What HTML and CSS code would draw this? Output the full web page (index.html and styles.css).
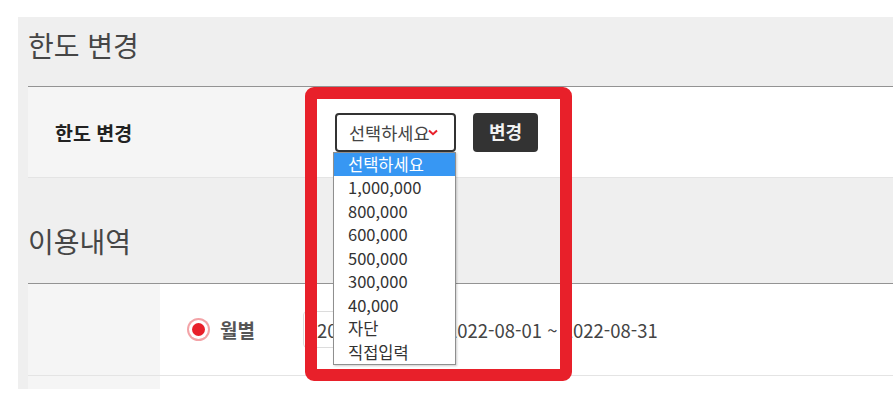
FILE: index.html
```html
<!DOCTYPE html>
<html lang="ko">
<head>
    <meta charset="UTF-8">
    <meta name="viewport" content="width=device-width, initial-scale=1.0">
    <title>한도 변경</title>
    <link rel="stylesheet" href="styles.css">
</head>
<body>
    <div class="panel">
        <h2 class="section-title">한도 변경</h2>
        <div class="form-table">
            <div class="form-row limit-row">
                <div class="form-label wide">한도 변경</div>
                <div class="form-field">
                    <div class="select-wrap">
                        <div class="fake-select">
                            선택하세요
                            <svg class="chevron" width="10" height="7" viewBox="0 0 10 7"><path d="M1 1.5 L5 5.2 L9 1.5" fill="none" stroke="#e8202a" stroke-width="2"/></svg>
                        </div>
                        <ul class="select-list">
                            <li class="active">선택하세요</li>
                            <li>1,000,000</li>
                            <li>800,000</li>
                            <li>600,000</li>
                            <li>500,000</li>
                            <li>300,000</li>
                            <li>40,000</li>
                            <li>자단</li>
                            <li>직접입력</li>
                        </ul>
                    </div>
                    <button class="btn-dark">변경</button>
                </div>
            </div>
        </div>

        <h2 class="section-title usage-title">이용내역</h2>
        <div class="form-table">
            <div class="form-row usage-row">
                <div class="form-label narrow"></div>
                <div class="form-field">
                    <label class="radio"><span class="radio-dot"></span>월별</label>
                    <div class="month-input">2022-08</div>
                    <span class="period">2022-08-01 ~ 2022-08-31</span>
                </div>
            </div>
            <div class="form-row tail-row">
                <div class="form-label narrow"></div>
                <div class="form-field"></div>
            </div>
        </div>
    </div>

    <!-- annotation box drawn over the limit selector -->
    <div class="highlight-box"></div>
</body>
</html>
```

FILE: styles.css
```css
body {
    margin: 0;
    background-color: #fff;
    font-family: "Noto Sans CJK KR", "Noto Sans", sans-serif;
    color: #444;
}
.panel {
    margin: 17px 0 0 18px;
    padding-left: 10px;
    background-color: #efefef;
}
.section-title {
    margin: 0;
    padding: 9px 0 22px;
    font-size: 28px;
    font-weight: normal;
    line-height: 38px;
    color: #464646;
}
.usage-title {
    padding-top: 44px;
    padding-bottom: 23px;
}
.form-table {
    border-top: 1px solid #939393;
}
.form-row {
    display: flex;
    background-color: #fff;
    border-bottom: 1px solid #e4e4e4;
}
.limit-row {
    height: 90px;
}
.usage-row {
    height: 91px;
}
.tail-row {
    height: 13px;
    border-bottom: none;
}
.form-label {
    display: flex;
    align-items: center;
    background-color: #f5f5f5;
    font-size: 19.5px;
    font-weight: bold;
    color: #222;
}
.form-label.wide {
    width: 255px;
    padding-left: 27px;
}
.form-label.narrow {
    width: 132px;
}
.form-field {
    flex: 1;
    display: flex;
    align-items: center;
}
.limit-row .form-field {
    padding-left: 25px;
    gap: 17px;
}
.select-wrap {
    position: relative;
}
.fake-select {
    box-sizing: border-box;
    width: 121px;
    height: 39px;
    padding-left: 12px;
    border: 2px solid #333;
    border-radius: 4px;
    display: flex;
    align-items: center;
    font-size: 17.5px;
    color: #444;
    background-color: #fff;
}
.chevron {
    margin-left: -2px;
    margin-top: 1px;
}
.select-list {
    position: absolute;
    top: 39px;
    left: -2px;
    width: 121px;
    margin: 0;
    padding: 0;
    list-style: none;
    background-color: #fff;
    border: 1px solid #8f8f8f;
    box-shadow: 1px 1px 2px rgba(0,0,0,0.2);
    z-index: 2;
}
.select-list li {
    height: 23.5px;
    line-height: 23.5px;
    padding-left: 14px;
    font-size: 16.5px;
    color: #333;
}
.select-list li.active {
    background-color: #3797f3;
    color: #fff;
}
.btn-dark {
    width: 65px;
    height: 39px;
    border: none;
    border-radius: 4px;
    background-color: #333;
    color: #f2f2f2;
    font-family: inherit;
    font-size: 18px;
    font-weight: bold;
    padding-bottom: 4px;
}
.usage-row .form-field {
    padding-left: 32px;
}
.radio {
    display: flex;
    align-items: center;
    gap: 15px;
    width: 111px;
    font-size: 19px;
    font-weight: bold;
    color: #555;
}
.radio-dot {
    width: 13px;
    height: 13px;
    border-radius: 50%;
    background-color: #e8202a;
    box-shadow: 0 0 0 3px #fff, 0 0 0 5px #f3a3a7;
}
.month-input {
    box-sizing: border-box;
    width: 132px;
    height: 37px;
    padding-left: 13px;
    border: 1px solid #dcdcdc;
    border-radius: 4px;
    display: flex;
    align-items: center;
    font-size: 18.5px;
    color: #444;
}
.period {
    margin-left: 12px;
    font-size: 18.5px;
    color: #444;
}
.highlight-box {
    position: absolute;
    left: 305px;
    top: 87px;
    width: 243px;
    height: 270px;
    border: 12px solid #e8202a;
    border-radius: 9px;
    z-index: 3;
}
```
